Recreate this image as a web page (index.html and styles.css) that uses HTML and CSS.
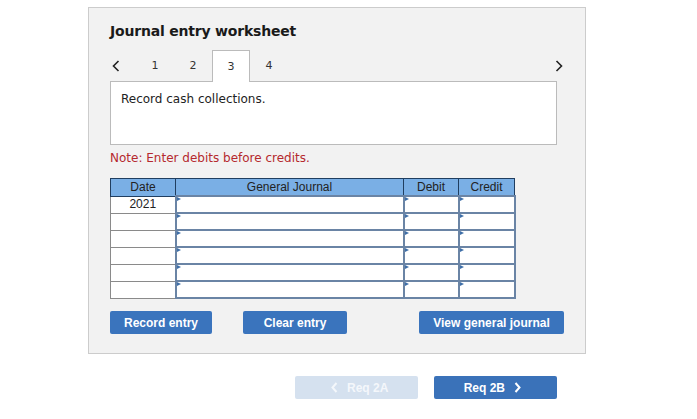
FILE: index.html
```html
<!DOCTYPE html>
<html>
<head>
<meta charset="utf-8">
<link rel="stylesheet" href="styles.css">
</head>
<body>
<div class="panel">
  <h1 class="title">Journal entry worksheet</h1>
  <div class="tabs">
    <span class="arrow"><svg width="8" height="12" viewBox="0 0 8 12"><path d="M6.5 1 L1.5 6 L6.5 11" fill="none" stroke="#222" stroke-width="1.6"/></svg></span>
    <span class="tab">1</span>
    <span class="tab">2</span>
    <span class="tab active">3</span>
    <span class="tab">4</span>
    <span class="spacer"></span>
    <span class="arrow right"><svg width="8" height="12" viewBox="0 0 8 12"><path d="M1.5 1 L6.5 6 L1.5 11" fill="none" stroke="#222" stroke-width="1.6"/></svg></span>
  </div>
  <div class="textbox">Record cash collections.</div>
  <div class="note">Note: Enter debits before credits.</div>
  <table class="journal">
    <thead>
      <tr><th class="c-date">Date</th><th class="c-gj">General Journal</th><th class="c-dr">Debit</th><th class="c-cr">Credit</th></tr>
    </thead>
    <tbody>
      <tr><td class="date">2021</td><td class="in"></td><td class="in"></td><td class="in"></td></tr>
      <tr><td class="date"></td><td class="in"></td><td class="in"></td><td class="in"></td></tr>
      <tr><td class="date"></td><td class="in"></td><td class="in"></td><td class="in"></td></tr>
      <tr><td class="date"></td><td class="in"></td><td class="in"></td><td class="in"></td></tr>
      <tr><td class="date"></td><td class="in"></td><td class="in"></td><td class="in"></td></tr>
      <tr><td class="date"></td><td class="in"></td><td class="in"></td><td class="in"></td></tr>
    </tbody>
  </table>
  <div class="actions">
    <button class="btn b-record">Record entry</button>
    <button class="btn b-clear">Clear entry</button>
    <span class="spacer"></span>
    <button class="btn b-view">View general journal</button>
  </div>
</div>
<div class="nav">
  <button class="navbtn prev"><svg class="chev" width="7" height="11" viewBox="0 0 7 11"><path d="M5.5 1 L1.5 5.5 L5.5 10" fill="none" stroke="currentColor" stroke-width="2"/></svg> Req 2A</button>
  <button class="navbtn next">Req 2B <svg class="chev" width="7" height="11" viewBox="0 0 7 11"><path d="M1.5 1 L5.5 5.5 L1.5 10" fill="none" stroke="currentColor" stroke-width="2"/></svg></button>
</div>
</body>
</html>
```

FILE: styles.css
```css
html, body {
  margin: 0;
  padding: 0;
  background: #fff;
}
body {
  font-family: "DejaVu Sans", Verdana, sans-serif;
  color: #222;
}
.panel {
  box-sizing: border-box;
  margin: 7px 0 0 88px;
  width: 498px;
  height: 347px;
  background: #f2f2f2;
  border: 1px solid #cccccc;
  padding: 14px 28px 0 21px;
}
.title {
  margin: 0;
  font-size: 14px;
  font-weight: bold;
  line-height: 18px;
  color: #1a1a1a;
  letter-spacing: -0.2px;
}
.tabs {
  display: flex;
  align-items: stretch;
  width: 453px;
  height: 31px;
  margin-top: 10px;
  font-size: 11px;
}
.arrow {
  width: 26px;
  display: flex;
  align-items: center;
  padding-left: 2px;
  box-sizing: border-box;
}
.arrow.right {
  width: 8px;
  padding: 0;
}
.tab {
  width: 38px;
  display: flex;
  align-items: center;
  justify-content: center;
  box-sizing: border-box;
  color: #333;
}
.tab.active {
  background: #fff;
  border: 1px solid #bbbbbb;
  border-bottom: none;
  position: relative;
  height: 32px;
  z-index: 1;
}
.spacer {
  flex: 1;
}
.textbox {
  box-sizing: border-box;
  height: 64px;
  width: 447px;
  background: #fff;
  border: 1px solid #bbbbbb;
  padding: 9px 10px;
  font-size: 12px;
  line-height: 16px;
  color: #222;
}
.note {
  margin-top: 5px;
  font-size: 12px;
  line-height: 16px;
  color: #b5292e;
}
.journal {
  margin-top: 12px;
  border-collapse: collapse;
  font-family: "Liberation Sans", Arial, sans-serif;
  font-size: 12px;
}
.journal th {
  background: #7aafe5;
  border: 1px solid #203e60;
  font-weight: normal;
  color: #222;
  height: 16px;
  padding: 0;
  line-height: 16px;
}
.c-date { width: 64px; }
.c-gj { width: 227px; }
.c-dr { width: 54px; }
.c-cr { width: 55px; }
.journal td {
  height: 15px;
  padding: 0;
  line-height: 15px;
}
.journal td.date {
  border: 1px solid #8a8a8a;
  text-align: center;
  background: #fff;
  color: #222;
}
.journal td.in {
  border: 2px solid #6a84a5;
  background: #fff;
  position: relative;
}
.journal td.in::before {
  content: "";
  position: absolute;
  left: 0;
  top: 0;
  border-left: 4px solid #3f6fa8;
  border-top: 2.5px solid transparent;
  border-bottom: 2.5px solid transparent;
}
.actions {
  display: flex;
  margin-top: 12px;
  width: 454px;
}
.btn {
  height: 23px;
  border: none;
  border-radius: 2px;
  background: #3a74bd;
  color: #fff;
  font-family: "Liberation Sans", Arial, sans-serif;
  font-weight: bold;
  font-size: 12px;
  padding: 0;
}
.b-record { width: 102px; }
.b-clear { width: 104px; margin-left: 31px; }
.b-view { width: 145px; }
.nav {
  display: flex;
  gap: 16px;
  margin: 22px 0 0 295px;
}
.navbtn {
  width: 123px;
  height: 23px;
  border: none;
  border-radius: 2px;
  font-family: "Liberation Sans", Arial, sans-serif;
  font-weight: bold;
  font-size: 12px;
  padding: 0;
  color: #fff;
}
.navbtn.prev {
  background: #d5e1ef;
  color: #f4f7fb;
}
.navbtn.next {
  background: #3a72b9;
}
.chev {
  margin: 0 6px;
  vertical-align: -1px;
}
```
